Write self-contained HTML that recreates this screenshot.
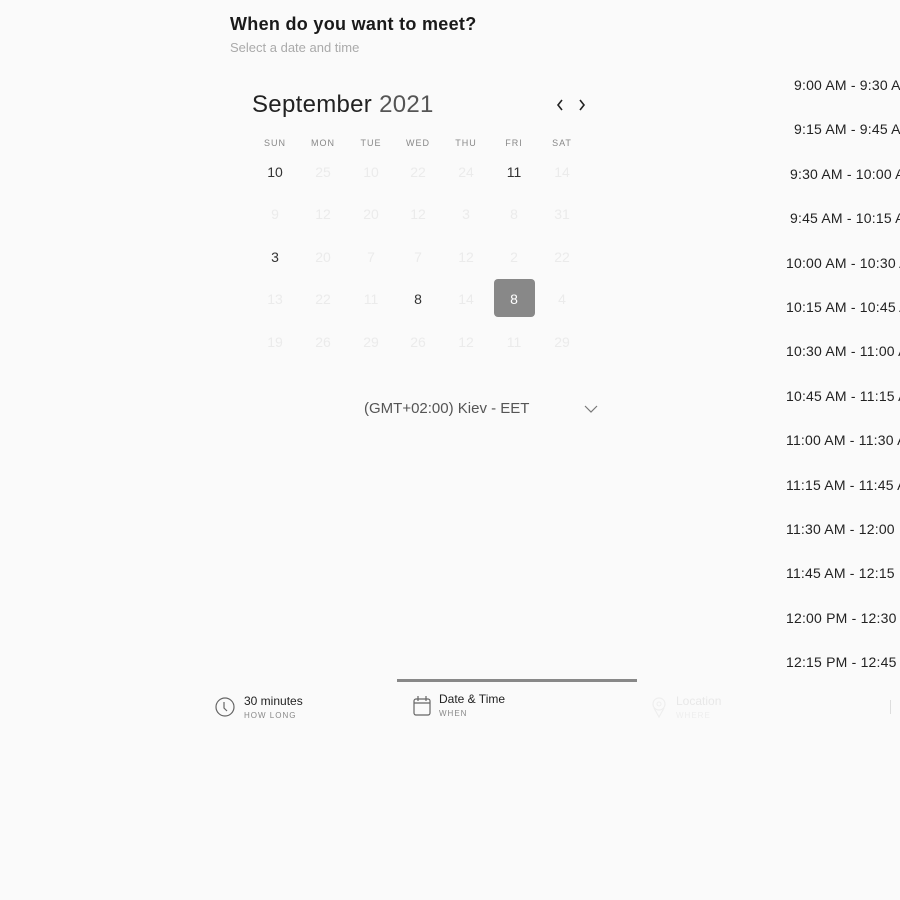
<!DOCTYPE html><html><head><style>
body{margin:0;width:900px;height:900px;background:#fafafa;font-family:"Liberation Sans",sans-serif;position:relative;overflow:hidden;color:#222}
.a{position:absolute;white-space:nowrap}
.c{transform:translateX(-50%)}
.h{font-size:9px;color:#888;letter-spacing:1px}
.d{font-size:14px;color:#ebebeb}
.d.on{color:#333}
.t{font-size:14px;color:#222;letter-spacing:0.2px}
</style></head><body>
<div class="a" style="left:230px;top:14px;font-size:18px;font-weight:bold;color:#1a1a1a;letter-spacing:0.3px">When do you want to meet?</div>
<div class="a" style="left:230px;top:40px;font-size:13px;color:#aaa">Select a date and time</div>
<div class="a" style="left:252px;top:91px;font-size:24px;color:#222;letter-spacing:0.3px">September <span style="color:#555">2021</span></div>
<svg class="a" style="left:556px;top:99px" width="8" height="12"><path d="M6 1L2 6l4 5" fill="none" stroke="#222" stroke-width="1.6"/></svg>
<svg class="a" style="left:578px;top:99px" width="8" height="12"><path d="M2 1l4 5-4 5" fill="none" stroke="#222" stroke-width="1.6"/></svg>
<div class="a" style="left:494px;top:279px;width:41px;height:38px;background:#888;border-radius:4px"></div>
<div id="g"></div>
<div class="a" style="left:364px;top:400px;font-size:15px;color:#555">(GMT+02:00) Kiev - EET</div>
<svg class="a" style="left:584px;top:405px" width="14" height="9"><path d="M1 1l6 6 6-6" fill="none" stroke="#777" stroke-width="1.2"/></svg>
<div id="t"></div>
<div class="a" style="left:397px;top:679px;width:240px;height:3px;background:#888"></div>
<svg class="a" style="left:215px;top:697px" width="20" height="20"><circle cx="10" cy="10" r="9" fill="none" stroke="#666" stroke-width="1.2"/><path d="M9 5v6l3 3" fill="none" stroke="#666" stroke-width="1.2"/></svg>
<div class="a" style="left:244px;top:694px;font-size:12px;color:#222">30 minutes</div>
<div class="a" style="left:244px;top:711px;font-size:8px;color:#888;letter-spacing:1px">HOW LONG</div>
<svg class="a" style="left:412px;top:695px" width="20" height="22"><rect x="2" y="4" width="16" height="16" rx="2" fill="none" stroke="#666" stroke-width="1.2"/><path d="M2 8h16M6 1v5M14 1v5" stroke="#666" stroke-width="1.2"/></svg>
<div class="a" style="left:439px;top:692px;font-size:12px;color:#222">Date &amp; Time</div>
<div class="a" style="left:439px;top:709px;font-size:8px;color:#888;letter-spacing:1px">WHEN</div>
<svg class="a" style="left:651px;top:697px" width="16" height="22"><circle cx="8" cy="7" r="6" fill="none" stroke="#eee" stroke-width="1.2"/><circle cx="8" cy="7" r="2" fill="none" stroke="#eee"/><path d="M3 11l5 9 5-9" fill="none" stroke="#eee" stroke-width="1.2"/></svg>
<div class="a" style="left:676px;top:694px;font-size:12px;color:#e8e8e8">Location</div>
<div class="a" style="left:676px;top:711px;font-size:8px;color:#eee;letter-spacing:1px">WHERE</div>
<div class="a" style="left:890px;top:700px;width:1px;height:14px;background:#ddd"></div>
<script>
var xs=[275,323,371,418,466,514,562],hd=["SUN","MON","TUE","WED","THU","FRI","SAT"];
var rows=[[10,25,10,22,24,11,14],[9,12,20,12,3,8,31],[3,20,7,7,12,2,22],[13,22,11,8,14,8,4],[19,26,29,26,12,11,29]];
var on={"0,0":1,"0,5":1,"2,0":1,"3,3":1};
var s="";
hd.forEach((h,i)=>s+='<div class="a c h" style="left:'+xs[i]+'px;top:138px">'+h+'</div>');
var ys=[164,206,249,291,334];
rows.forEach((r,ri)=>r.forEach((v,ci)=>{var st=on[ri+","+ci]?" on":"";var col=(ri==3&&ci==5)?"color:#fff":"";s+='<div class="a c d'+st+'" style="left:'+xs[ci]+'px;top:'+ys[ri]+'px;'+col+'">'+v+'</div>'}));
document.getElementById("g").innerHTML=s;
var T=["9:00 AM - 9:30 AM","9:15 AM - 9:45 AM","9:30 AM - 10:00 AM","9:45 AM - 10:15 AM","10:00 AM - 10:30 AM","10:15 AM - 10:45 AM","10:30 AM - 11:00 AM","10:45 AM - 11:15 AM","11:00 AM - 11:30 AM","11:15 AM - 11:45 AM","11:30 AM - 12:00 PM","11:45 AM - 12:15 PM","12:00 PM - 12:30 PM","12:15 PM - 12:45 PM"];
var L=[794,794,790,790,786,786,786,786,786,786,786,786,786,786];
s="";T.forEach((t,i)=>s+='<div class="a t" style="left:'+L[i]+'px;top:'+(77+i*44.4)+'px">'+t+'</div>');
document.getElementById("t").innerHTML=s;
</script>
</body></html>
